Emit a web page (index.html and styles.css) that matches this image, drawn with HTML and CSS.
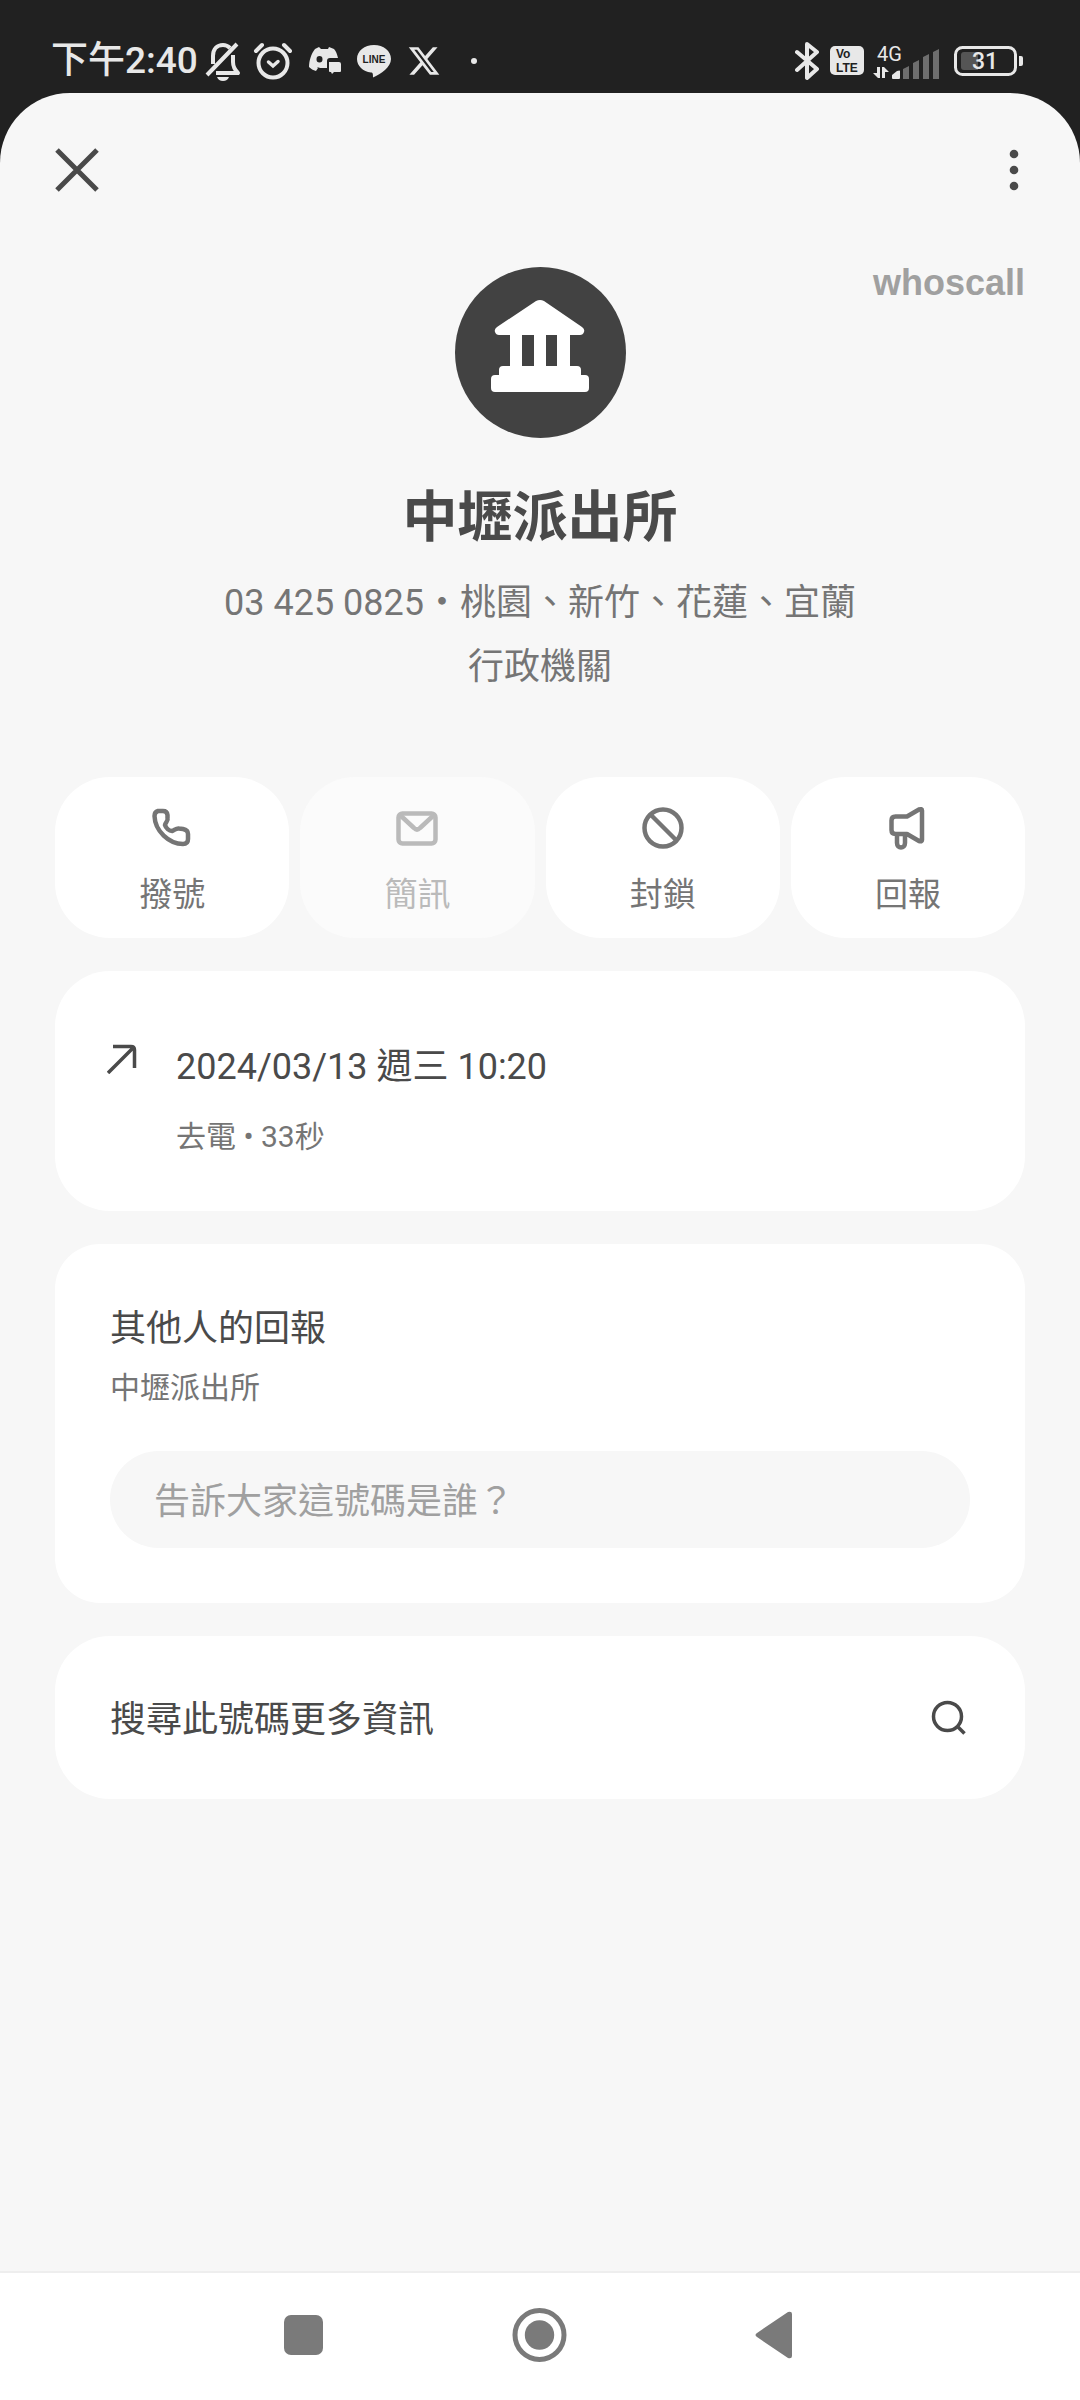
FILE: index.html
```html
<!DOCTYPE html>
<html lang="zh-TW">
<head>
<meta charset="utf-8">
<meta name="viewport" content="width=device-width, initial-scale=1">
<title>中壢派出所</title>
<link rel="stylesheet" href="styles.css">
</head>
<body>
<div class="status">
  <div class="status-left">
    <span class="clock">下午2:40</span>
    <svg width="36" height="40" viewBox="0 0 36 40" fill="none" stroke="currentColor" stroke-width="4" stroke-linejoin="round"><path d="M8 23V15C8 8 12 4 18 4c3 0 5 1 7 3M28 14v7c0 5 2 8 5 11H11M2 34L32 3"/><path d="M12 36h12c-1 2.500-3 4-6 4s-5-1.500-6-4z" fill="currentColor" stroke="none"/></svg>
    <svg class="alarm" width="40" height="40" viewBox="0 0 40 40" fill="none" stroke="currentColor" stroke-width="4" stroke-linecap="round"><circle cx="20" cy="22" r="14.500"/><path d="M3 10l6-6M37 10l-6-6"/><path d="M15.500 21l4.500 4 5-4.500" stroke-width="3.500"/></svg>
    <svg class="discord" width="32" height="30" viewBox="0 0 32 30" fill="currentColor"><path fill-rule="evenodd" d="M10 1L6 3C2 8 0 15 0 21c2 2 4 3 7 4l2-3-1-1c2 1 4 1 8 1h2v-7c0-2 1-3 3-3h8c-1-4-2-7-4-9l-5-2-1 2h-7zM10.500 10a3 3.300 0 100 6.600 3 3.300 0 000-6.600z"/><path d="M20 16h10q2 0 2 2v7q0 1-1 1h-6l-2 2-1-2h-1q-1 0-1-1z"/></svg>
    <svg class="line" width="34" height="34" viewBox="0 0 34 34"><path fill="currentColor" d="M17 1C7.500 1 0 7 0 15c0 7 6 12.500 14 13.500 2 0 2 1.500 2 5C24 30 34 23 34 15 34 7 26.500 1 17 1z"/><text x="17" y="19" text-anchor="middle" class="line-text">LINE</text></svg>
    <svg class="xlogo" width="34" height="34" viewBox="0 0 24 24" fill="currentColor"><path d="M18.244 2.250h3.308l-7.227 8.260 8.502 11.240H16.170l-5.214-6.817L4.990 21.750H1.680l7.730-8.835L1.254 2.250H8.080l4.713 6.231zm-1.161 17.520h1.833L7.084 4.126H5.117z"/></svg>
    <span class="more-dot"></span>
  </div>
  <div class="status-right">
    <svg width="26" height="40" viewBox="0 0 26 40" fill="none" stroke="currentColor" stroke-width="4" stroke-linejoin="round" stroke-linecap="round"><path d="M2 11l20 17-10 9V3l10 8L2 29"/></svg>
    <svg class="volte" width="34" height="29" viewBox="0 0 34 29"><rect width="34" height="29" rx="5" fill="currentColor"/><text x="6" y="12" class="volte-text">Vo</text><text x="6" y="26" class="volte-text">LTE</text></svg>
    <svg class="signal" width="68" height="36" viewBox="0 0 68 36" fill="currentColor"><text x="4" y="18" class="net-text">4G</text><path d="M4 24h3v11H5l-5-5h4zM9 35V24h2l5 5h-4v6zM19 35v-3l5-4q3-1 3 0v7q0 1-1 1h-6q-1 0-1-1z"/><path fill="#6e6e6e" d="M30 26l6-3v13h-6zM40 20l6-3v19h-6zM50 14l6-3v25h-6zM60 9l6-3v30h-6z"/></svg>
    <svg width="70" height="32" viewBox="0 0 70 32"><rect x="1.500" y="2.500" width="60" height="27" rx="7" fill="none" stroke="currentColor" stroke-width="3"/><path d="M65 11h2q2 0 2 2v6q0 2-2 2h-2z" fill="currentColor"/><path d="M10 7h14v18H10q-3 0-3-3V10q0-3 3-3z" fill="#555"/><text x="31" y="24" text-anchor="middle" class="battery-text">31</text></svg>
  </div>
</div>

<main class="sheet">
  <header class="toolbar">
    <button class="icon-btn" aria-label="關閉"><svg width="44" height="44" viewBox="0 0 44 44" fill="none" stroke="currentColor" stroke-width="5"><path d="M2 2l40 40M42 2L2 42"/></svg></button>
    <button class="icon-btn" aria-label="更多"><svg width="22" height="44" viewBox="0 0 22 44" fill="currentColor"><circle cx="11" cy="6" r="4.300"/><circle cx="11" cy="22" r="4.300"/><circle cx="11" cy="38" r="4.300"/></svg></button>
  </header>

  <section class="profile">
    <div class="avatar-row">
      <div class="avatar"><svg width="98" height="92" viewBox="0 0 98 92" fill="currentColor"><path d="M45 1q4-2 8 0l38 26q3 2 2 5-1 3-4 3H79v31h7q4 0 4 4v5h4q4 0 4 4v9q0 4-4 4H4q-4 0-4-4v-9q0-4 4-4h4v-5q0-4 4-4h7V35H8q-3 0-4-3-1-3 2-5zM31 35v31h12V35zm24 0v31h11V35z"/></svg></div>
      <span class="brand">whoscall</span>
    </div>
    <h1>中壢派出所</h1>
    <p>03 425 0825・桃園、新竹、花蓮、宜蘭</p>
    <p>行政機關</p>
  </section>

  <div class="actions">
    <button class="action"><svg width="44" height="44" viewBox="0 0 44 44" fill="none" stroke="currentColor" stroke-width="4.500" stroke-linejoin="round"><path d="M8 5h5q4 0 4.500 4v3c1 3-2 4-2.500 7 1 3 4 6 7 6 3-1 4-3 7-2.500l4 .5q5 1 5 5v5q0 5-5 5C19 38 5 25 4.500 10q0-4 3.500-5z"/></svg>撥號</button>
    <button class="action" disabled><svg width="44" height="44" viewBox="0 0 44 44" fill="none" stroke="currentColor" stroke-width="4.500" stroke-linejoin="round"><rect x="3.500" y="7.500" width="37" height="30" rx="4"/><path d="M5 9l14 13q3 3 6 0L39 9"/></svg>簡訊</button>
    <button class="action"><svg width="44" height="44" viewBox="0 0 44 44" fill="none" stroke="currentColor" stroke-width="4.500"><circle cx="22" cy="22" r="18.500"/><path d="M10 9l25 25"/></svg>封鎖</button>
    <button class="action"><svg width="44" height="44" viewBox="0 0 44 44" fill="none" stroke="currentColor" stroke-width="4.500" stroke-linejoin="round"><path d="M21 10.500H9.500q-4 0-4 4V24q0 4 4 4H21l12 7q3 1 3-1V4.500q0-2-3-1zM11 29v8c0 6 8 6 8 0v-8"/></svg>回報</button>
  </div>

  <section class="card call">
    <svg width="30" height="30" viewBox="0 0 30 30" fill="none" stroke="currentColor" stroke-width="3.500"><path d="M1 29L27 3M6 2.500h18q3.500 0 3.500 3.500v18"/></svg>
    <div>
      <p class="primary">2024/03/13 週三 10:20</p>
      <p class="secondary">去電 • 33秒</p>
    </div>
  </section>

  <section class="card reports">
    <h2 class="primary"><label for="who">其他人的回報</label></h2>
    <p class="secondary">中壢派出所</p>
    <input id="who" type="text" placeholder="告訴大家這號碼是誰？">
  </section>

  <button class="card search">
    <span>搜尋此號碼更多資訊</span>
    <svg width="36" height="36" viewBox="0 0 36 36" fill="none" stroke="currentColor" stroke-width="3.500"><circle cx="16.500" cy="16.500" r="14"/><path d="M26 26l7.500 7.500"/></svg>
  </button>
</main>

<nav class="navbar">
  <button aria-label="最近"><svg width="56" height="56" viewBox="0 0 56 56" fill="currentColor"><rect x="8" y="8" width="39" height="40" rx="7"/></svg></button>
  <button aria-label="主畫面"><svg width="56" height="56" viewBox="0 0 56 56"><circle cx="27.500" cy="28" r="24.500" fill="none" stroke="currentColor" stroke-width="5"/><circle cx="27.500" cy="28" r="14.700" fill="currentColor"/></svg></button>
  <button aria-label="返回"><svg width="56" height="56" viewBox="0 0 56 56" fill="currentColor"><path d="M40 5q4-1 4 2v42q0 3-4 2L9 30q-3-2 0-4z"/></svg></button>
</nav>
</body>
</html>
```

FILE: styles.css
```css
* {
  box-sizing: border-box;
}

body {
  margin: 0;
  min-height: 100vh;
  display: flex;
  flex-direction: column;
  background: #212121;
  color: #4a4a4a;
  font-family: Roboto, "Noto Sans CJK TC", sans-serif;
}

h1,
h2,
p {
  margin: 0;
}

svg {
  display: block;
  flex: none;
}

button {
  border: 0;
  padding: 0;
  background: none;
  color: inherit;
  font: inherit;
}

.status {
  display: flex;
  justify-content: space-between;
  align-items: center;
  height: 93px;
  padding: 28px 56px 0 51px;
  color: #e8e8e8;
}

.status-left,
.status-right {
  display: flex;
  align-items: center;
}

.clock {
  margin-right: 7px;
  font-size: 37px;
  line-height: 44px;
  font-weight: 500;
}

.alarm {
  margin-left: 12px;
}

.discord {
  margin-left: 16px;
}

.line {
  margin-left: 16px;
}

.xlogo {
  margin-left: 16px;
}

.line-text {
  fill: #212121;
  font: bold 10px "Liberation Sans", sans-serif;
}

.more-dot {
  width: 6px;
  height: 6px;
  margin-left: 30px;
  border-radius: 50%;
  background: currentColor;
}

.volte {
  margin-left: 9px;
}

.volte-text {
  fill: #212121;
  font: bold 12px "Liberation Sans", sans-serif;
}

.signal {
  margin: 0 13px 0 9px;
}

.net-text {
  font-size: 20px;
}

.battery-text {
  fill: currentColor;
  font-size: 23px;
  font-weight: 500;
}

.sheet {
  flex: 1;
  display: flex;
  flex-direction: column;
  padding: 0 55px 33px;
  border-radius: 70px 70px 0 0;
  background: #f7f7f7;
}

.toolbar {
  display: flex;
  justify-content: space-between;
  align-items: center;
  height: 154px;
}

.profile {
  padding: 20px 0 78px;
  color: #757575;
  font-size: 36px;
  line-height: 64px;
  text-align: center;
}

.avatar-row {
  display: grid;
  grid-template-columns: 1fr auto 1fr;
}

.avatar {
  grid-column: 2;
  display: flex;
  align-items: center;
  justify-content: center;
  width: 171px;
  height: 171px;
  padding-bottom: 13px;
  border-radius: 50%;
  background: #424242;
  color: #fff;
}

.brand {
  justify-self: end;
  color: #a0a0a0;
  font: bold 36px/32px "Liberation Sans", sans-serif;
}

h1 {
  margin: 39px 0 14px;
  color: #4a4a4a;
  font-size: 55px;
  line-height: 80px;
  font-weight: 700;
}

.actions {
  display: grid;
  grid-template-columns: repeat(4, 1fr);
  gap: 11px;
}

.action {
  display: flex;
  flex-direction: column;
  align-items: center;
  gap: 23px;
  height: 161px;
  padding-top: 29px;
  border-radius: 55px;
  background: #fff;
  color: #757575;
  font-size: 33px;
  line-height: 44px;
}

.action:disabled {
  background: #fbfbfb;
  color: #bababa;
}

.card {
  margin-top: 33px;
  padding: 55px;
  border-radius: 55px;
  background: #fff;
}

.primary {
  font-size: 36px;
  line-height: 56px;
  font-weight: 400;
}

.secondary {
  color: #757575;
  font-size: 30px;
  line-height: 44px;
}

.call {
  display: flex;
  gap: 39px;
  padding: 68px 55px 52px 52px;
}

.call svg {
  margin-top: 5px;
}

.call .secondary {
  margin-top: 20px;
}

.reports {
  padding-top: 57px;
  border-radius: 45px;
}

.reports .secondary {
  margin: 9px 0 41px;
}

input {
  display: block;
  width: 100%;
  height: 97px;
  padding: 4px 44px 0;
  border: 0;
  border-radius: 49px;
  background: #f7f7f7;
  color: #4a4a4a;
  font: inherit;
  font-size: 36px;
}

input::placeholder {
  color: #a0a0a0;
  opacity: 1;
}

.search {
  display: flex;
  justify-content: space-between;
  align-items: center;
  padding: 55px 58px 55px 55px;
  font-size: 36px;
  line-height: 53px;
}

.search span {
  padding-top: 6px;
  line-height: 47px;
}

.navbar {
  display: flex;
  justify-content: center;
  gap: 180px;
  padding: 34px 0 37px;
  border-top: 2px solid #eee;
  background: #fff;
  color: #7a7a7a;
}
```
